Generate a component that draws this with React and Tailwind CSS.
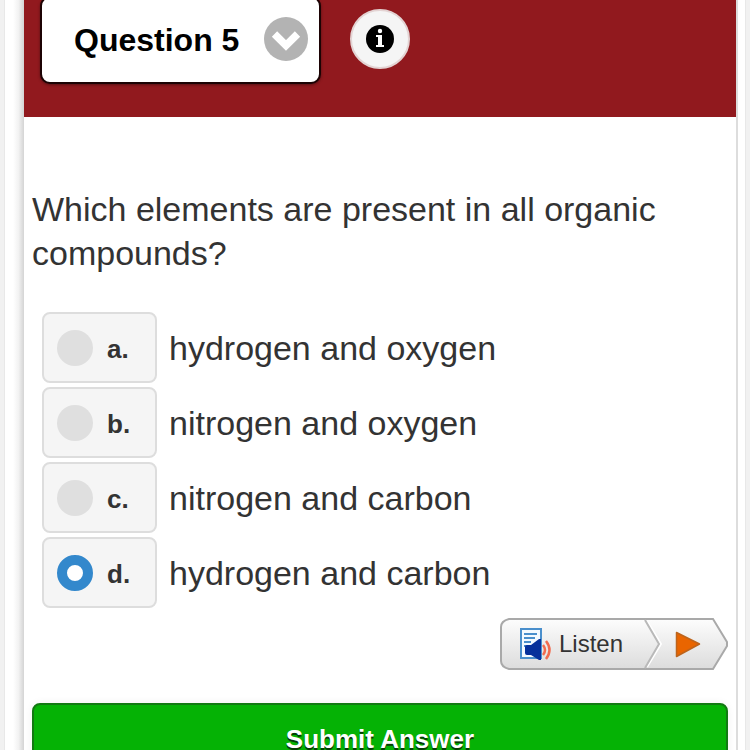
import React, { useState } from "react";

const options = [
  { id: "a", text: "hydrogen and oxygen" },
  { id: "b", text: "nitrogen and oxygen" },
  { id: "c", text: "nitrogen and carbon" },
  { id: "d", text: "hydrogen and carbon" },
];

const ListenButton = () => (
  <button type="button" className="relative flex h-[52px] w-[228px] items-center pl-[19px] text-2xl text-[#333]">
    <svg className="absolute inset-0 h-full w-full" viewBox="0 0 228 52" fill="none">
      <defs>
        <linearGradient id="listenFill" x1="0" y1="0" x2="0" y2="1">
          <stop offset="0" stopColor="#fdfdfd" />
          <stop offset="1" stopColor="#dcdcdc" />
        </linearGradient>
      </defs>
      <path d="M9 1H213L227 24V28L213 51H9Q1 49 1 43V9Q1 3 9 1Z" fill="url(#listenFill)" stroke="#a9a9a9" strokeWidth="2" />
      <path d="M147 3L161 26L147 49" stroke="#fff" strokeWidth="2" />
      <path d="M145 2L159 26L145 50" stroke="#b9b9b9" strokeWidth="2" />
      <path d="M176.500 14.500V38.500L199.500 26Z" fill="#e96500" stroke="#bd641c" strokeWidth="1.500" strokeLinejoin="round" />
    </svg>
    {/* Page with speaker */}
    <svg className="relative mr-2 h-8 w-8" viewBox="0 0 32 32" fill="none">
      <path d="M2 1H22V30H2Z" fill="#f4faff" stroke="#4a8fcc" strokeWidth="2" />
      <path d="M5 6H18M5 10H16M5 14H12M5 18H8" stroke="#4a8fcc" strokeWidth="2" />
      <path d="M6 19Q6 17 8 17H12L20 11H22V32H20L12 27H8Q6 27 6 25Z" fill="#06309b" />
      <path d="M24 17Q28 22 24 27" stroke="#f26b4f" strokeWidth="2.500" />
      <path d="M27 13Q34 22 27 31" stroke="#f26b4f" strokeWidth="2.500" />
    </svg>
    <span className="relative">Listen</span>
  </button>
);

const App = () => {
  const [answer, setAnswer] = useState("d");

  return (
    <div className="h-screen overflow-hidden bg-[#f1f1f1] px-1 font-['Liberation_Sans',Arial,sans-serif] text-[#333]">
      <div className="flex h-full border-x border-[#e8e8e8] bg-white pr-[7px] pl-2">
        {/* Soft edge along the card */}
        <div className="w-[11px] shrink-0 bg-linear-to-r from-white via-[#f2f2f2] to-[#d4d4d4]" />

        <div className="min-w-0 flex-1 border-r-2 border-[#ddd] bg-white">
          <header className="flex h-[117px] items-start bg-[#91191e] pl-4">
            <div className="relative -mt-1">
              <select
                aria-label="Question"
                className="h-[88px] w-[281px] appearance-none rounded-[10px] border-2 border-[#1c0304] bg-white pl-8 text-[32px] font-bold text-black shadow-[0_1px_3px_rgba(0,0,0,0.4)]"
              >
                <option>Question 5</option>
              </select>
              <svg className="pointer-events-none absolute top-[21px] right-[13px] size-11" viewBox="0 0 44 44" fill="none">
                <circle cx="22" cy="22" r="22" fill="#b3b3b3" />
                <path d="M10.500 17L22 28.500L33.500 17" stroke="#fff" strokeWidth="7.500" />
              </svg>
            </div>
            <button
              type="button"
              aria-label="Information"
              className="mt-[9px] ml-[29px] flex size-[60px] items-center justify-center rounded-full border-2 border-[#e3d3d3] bg-[#f5f5f5]"
            >
              <svg className="size-7" viewBox="0 0 28 28">
                <circle cx="14" cy="14" r="14" fill="#000" />
                <circle cx="14" cy="6" r="2.200" fill="#fff" />
                <path d="M10 10H16V20H18V22H10V20H12V12H10Z" fill="#fff" />
              </svg>
            </button>
          </header>

          <form onSubmit={(e) => e.preventDefault()} className="px-2 pt-[70px]">
            <fieldset>
              <legend className="text-[34px] leading-[44px]">Which elements are present in all organic compounds?</legend>

              <div className="mt-[37px] flex flex-col gap-1 pl-[10px]">
                {options.map((o) => (
                  <label key={o.id} className="flex h-[71px] items-center gap-3 text-[34px]">
                    <span className="flex h-full w-[115px] items-center gap-[14px] rounded-lg border-2 border-[#ddd] bg-[#f5f5f5] pl-[13px]">
                      <input
                        type="radio"
                        name="answer"
                        value={o.id}
                        checked={answer === o.id}
                        onChange={() => setAnswer(o.id)}
                        className="size-9 appearance-none rounded-full bg-[#dfdfdf] checked:border-10 checked:border-[#3388cc] checked:bg-white"
                      />
                      <span className="pt-1 text-[26px] font-bold">{o.id}.</span>
                    </span>
                    <span className="pt-0.5">{o.text}</span>
                  </label>
                ))}
              </div>
            </fieldset>

            <div className="mt-[10px] flex justify-end">
              <ListenButton />
            </div>

            <button
              type="submit"
              className="mt-[33px] h-[72px] w-full rounded-lg border-2 border-[#127a12] bg-[#05b205] text-[26px] font-bold text-white shadow-[0_0_8px_rgba(0,0,0,0.06)] [text-shadow:0_2px_0_#053d05]"
            >
              Submit Answer
            </button>
          </form>
        </div>
      </div>
    </div>
  );
};

export default App;
